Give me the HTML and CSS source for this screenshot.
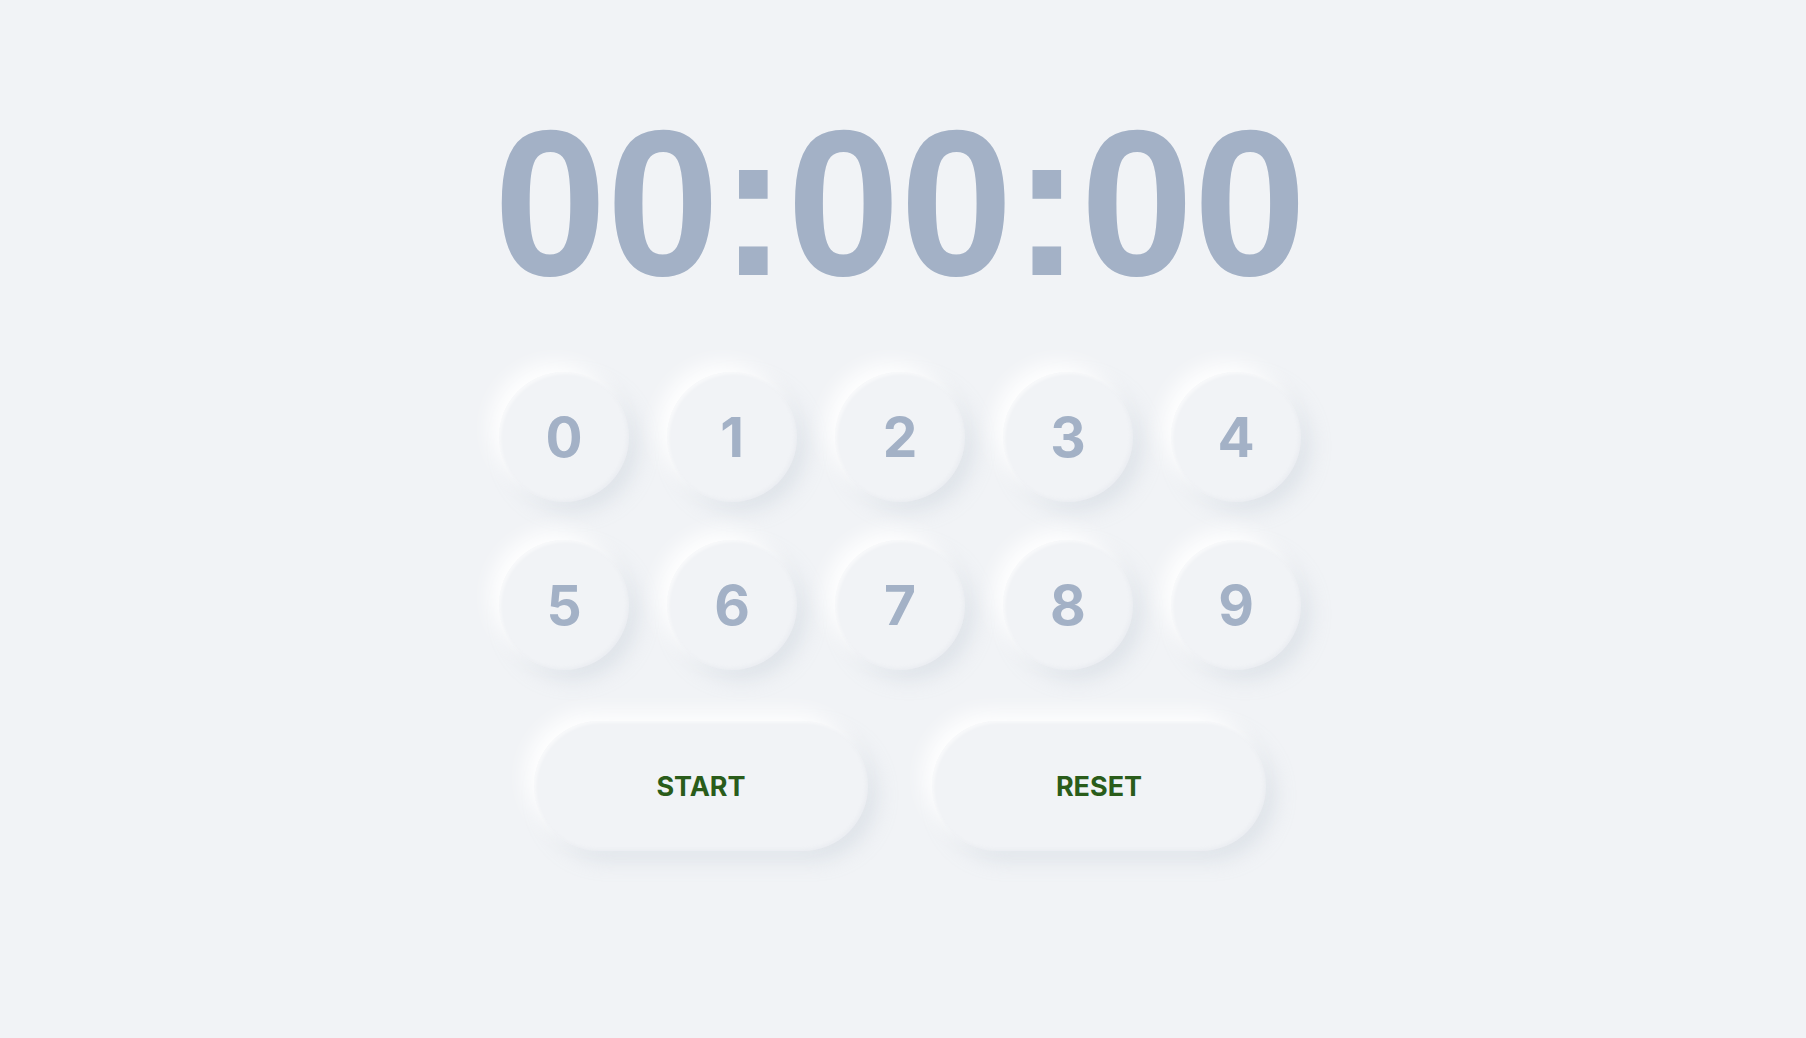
FILE: index.html
```html
<!DOCTYPE html>
<html lang="en">
<head>
<meta charset="utf-8">
<title>Timer</title>
<link rel="stylesheet" href="styles.css">
</head>
<body>
<main class="app">
  <div class="display">00:00:00</div>
  <div class="keypad">
    <button class="key">0</button>
    <button class="key">1</button>
    <button class="key">2</button>
    <button class="key">3</button>
    <button class="key">4</button>
    <button class="key">5</button>
    <button class="key">6</button>
    <button class="key">7</button>
    <button class="key">8</button>
    <button class="key">9</button>
  </div>
  <div class="actions">
    <button class="pill">START</button>
    <button class="pill">RESET</button>
  </div>
</main>
</body>
</html>
```
FILE: styles.css
```css
html, body {
  margin: 0;
  padding: 0;
  background: #f1f3f6;
  height: 100%;
}
body {
  padding-right: 6px;
  box-sizing: border-box;
}
.app {
  display: flex;
  flex-direction: column;
  align-items: center;
  padding-top: 101px;
}
.display {
  font-family: "Liberation Sans", Arial, Helvetica, sans-serif;
  font-weight: 700;
  font-size: 203px;
  line-height: 1;
  color: #a3b1c6;
  height: 203px;
  transform: scaleY(1.025);
}
.keypad {
  display: grid;
  grid-template-columns: repeat(5, 130px);
  gap: 38px;
  margin-top: 68px;
}
.key, .pill {
  border: none;
  background: #f1f3f6;
  box-shadow: -9px -9px 20px rgba(255,255,255,0.95), 9px 9px 20px rgba(186,195,208,0.34), inset 2px 2px 3px rgba(255,255,255,0.5), inset -2px -2px 3px rgba(220,224,230,0.25);
  cursor: pointer;
  padding: 0;
}
.key {
  width: 130px;
  height: 130px;
  border-radius: 50%;
  font-family: Inter, "Liberation Sans", sans-serif;
  font-weight: 700;
  font-size: 55px;
  color: #a3b1c6;
}
.actions {
  display: flex;
  gap: 64px;
  margin-top: 51px;
}
.pill {
  width: 334px;
  height: 130px;
  border-radius: 65px;
  font-family: Inter, "Liberation Sans", sans-serif;
  font-weight: 700;
  font-size: 27px;
  letter-spacing: 0;
  color: #2a5c1a;
}
```
